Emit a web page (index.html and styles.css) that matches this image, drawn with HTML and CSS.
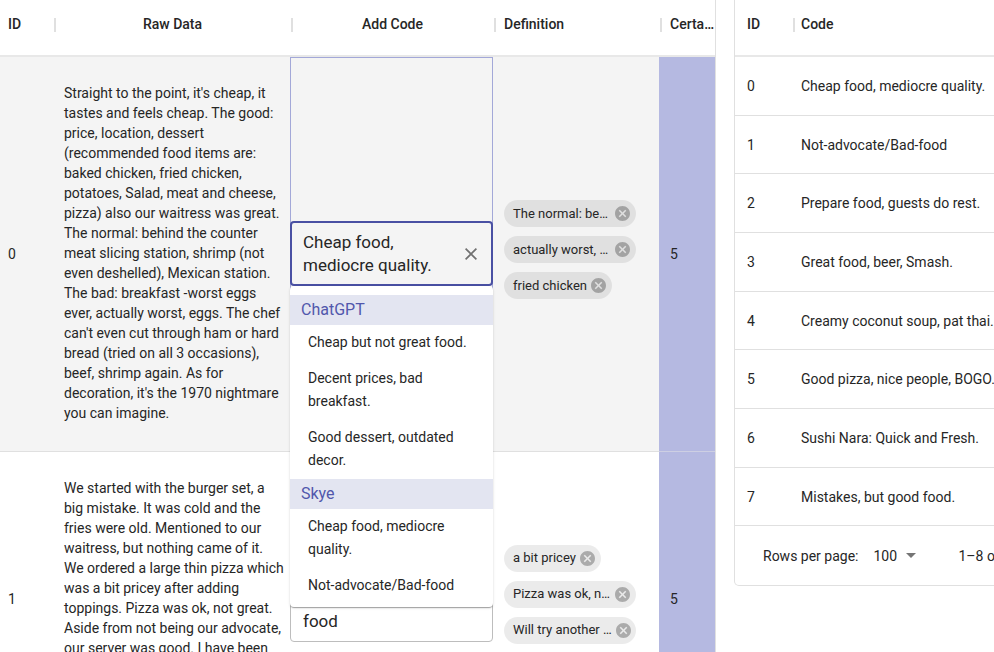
FILE: index.html
```html
<!DOCTYPE html>
<html lang="en">
<head>
<meta charset="utf-8">
<title>Coding table</title>
<link rel="stylesheet" href="styles.css">
</head>
<body>
<svg class="sprite" aria-hidden="true">
  <symbol id="cancel" viewBox="2 2 20 20"><path d="M12 2C6.47 2 2 6.47 2 12s4.47 10 10 10 10-4.47 10-10S17.53 2 12 2zm5 13.59L15.59 17 12 13.41 8.41 17 7 15.59 10.59 12 7 8.41 8.41 7 12 10.59 15.59 7 17 8.41 13.41 12 17 15.59z"/></symbol>
  <symbol id="clear" viewBox="5 5 14 14"><path d="M19 6.41 17.59 5 12 10.59 6.41 5 5 6.41 10.59 12 5 17.59 6.41 19 12 13.41 17.59 19 19 17.59 13.41 12z"/></symbol>
</svg>
<main class="page">
  <section class="panel panel-data">
    <table class="grid">
      <colgroup><col class="col-id"><col><col class="col-code"><col class="col-def"><col class="col-cert"></colgroup>
      <thead>
        <tr>
          <th class="first">ID</th>
          <th class="center">Raw Data</th>
          <th class="center">Add Code</th>
          <th>Definition</th>
          <th>Certa…</th>
        </tr>
      </thead>
      <tbody>
        <tr class="selected">
          <td class="first">0</td>
          <td class="raw">Straight to the point, it's cheap, it tastes and feels cheap. The good: price, location, dessert (recommended food items are: baked chicken, fried chicken, potatoes, Salad, meat and cheese, pizza) also our waitress was great. The normal: behind the counter meat slicing station, shrimp (not even deshelled), Mexican station. The bad: breakfast -worst eggs ever, actually worst, eggs. The chef can't even cut through ham or hard bread (tried on all 3 occasions), beef, shrimp again. As for decoration, it's the 1970 nightmare you can imagine.</td>
          <td class="code editing">
            <div class="field focused">
              <textarea rows="2" aria-label="Code for row 0">Cheap food,
mediocre quality.</textarea>
              <button type="button" class="clear" aria-label="Clear"><svg><use href="#clear"/></svg></button>
              <div class="menu" role="listbox" aria-label="Suggested codes">
                <div class="group">ChatGPT</div>
                <div class="option" role="option">Cheap but not great food.</div>
                <div class="option" role="option">Decent prices, bad breakfast.</div>
                <div class="option" role="option">Good dessert, outdated decor.</div>
                <div class="group">Skye</div>
                <div class="option" role="option">Cheap food, mediocre quality.</div>
                <div class="option" role="option">Not-advocate/Bad-food</div>
              </div>
            </div>
          </td>
          <td>
            <div class="chips">
              <span class="chip wide"><span>The normal: be…</span><button type="button" aria-label="Remove"><svg><use href="#cancel"/></svg></button></span>
              <span class="chip wide"><span>actually worst, …</span><button type="button" aria-label="Remove"><svg><use href="#cancel"/></svg></button></span>
              <span class="chip"><span>fried chicken</span><button type="button" aria-label="Remove"><svg><use href="#cancel"/></svg></button></span>
            </div>
          </td>
          <td class="certainty">5</td>
        </tr>
        <tr class="row-next">
          <td class="first">1</td>
          <td class="raw">We started with the burger set, a big mistake. It was cold and the fries were old. Mentioned to our waitress, but nothing came of it. We ordered a large thin pizza which was a bit pricey after adding toppings. Pizza was ok, not great. Aside from not being our advocate, our server was good. I have been</td>
          <td class="code">
            <div class="field">
              <textarea rows="3" aria-label="Code for row 1">Not-advocate/
Bad-
food</textarea>
            </div>
          </td>
          <td>
            <div class="chips">
              <span class="chip"><span>a bit pricey</span><button type="button" aria-label="Remove"><svg><use href="#cancel"/></svg></button></span>
              <span class="chip wide"><span>Pizza was ok, n…</span><button type="button" aria-label="Remove"><svg><use href="#cancel"/></svg></button></span>
              <span class="chip wide"><span>Will try another …</span><button type="button" aria-label="Remove"><svg><use href="#cancel"/></svg></button></span>
            </div>
          </td>
          <td class="certainty">5</td>
        </tr>
      </tbody>
    </table>
  </section>
  <section class="panel panel-codes">
    <table class="grid codes">
      <colgroup><col class="col-num"><col></colgroup>
      <thead><tr><th class="first">ID</th><th>Code</th></tr></thead>
      <tbody>
        <tr><td class="first">0</td><td>Cheap food, mediocre quality.</td></tr>
        <tr><td class="first">1</td><td>Not-advocate/Bad-food</td></tr>
        <tr><td class="first">2</td><td>Prepare food, guests do rest.</td></tr>
        <tr><td class="first">3</td><td>Great food, beer, Smash.</td></tr>
        <tr><td class="first">4</td><td>Creamy coconut soup, pat thai.</td></tr>
        <tr><td class="first">5</td><td>Good pizza, nice people, BOGO.</td></tr>
        <tr><td class="first">6</td><td>Sushi Nara: Quick and Fresh.</td></tr>
        <tr><td class="first">7</td><td>Mistakes, but good food.</td></tr>
      </tbody>
    </table>
    <footer class="pager">
      <label for="per-page">Rows per page:</label>
      <span class="select">
        <select id="per-page"><option>100</option></select>
        <svg viewBox="0 0 10 5" aria-hidden="true"><path d="M0 0h10L5 5z"/></svg>
      </span>
      <span class="range">1–8 of 8</span>
    </footer>
  </section>
</main>
</body>
</html>
```
FILE: styles.css
```css
* { box-sizing: border-box; }

body {
  margin: 0;
  height: 100vh;
  overflow: hidden;
  background: #fff;
  color: #262626;
  font: 14px/20px Roboto, "Liberation Sans", sans-serif;
}

.sprite { display: none; }

button {
  display: flex;
  flex: none;
  margin: 0;
  padding: 0;
  border: 0;
  background: none;
}

.page {
  display: grid;
  grid-template-columns: minmax(0, 716fr) minmax(0, 260fr);
  align-items: start;
  gap: 18px;
}

.panel-data { border-right: 1px solid #e0e0e0; }

.panel-codes {
  min-width: 420px;
  border: 1px solid #e0e0e0;
  border-top: 0;
  border-radius: 0 0 5px 5px;
}

/* Grid tables */
.grid {
  width: 100%;
  table-layout: fixed;
  border-collapse: separate;
  border-spacing: 0;
}

.col-id { width: 53px; }
.col-code { width: 203px; }
.col-def { width: 166px; }
.col-cert { width: 56px; }
.col-num { width: 57px; }

th {
  position: relative;
  height: 57px;
  padding: 0 0 8px 11px;
  border-bottom: 2px solid #e8e8e8;
  font-weight: 500;
  text-align: left;
  white-space: nowrap;
}

th + th::before {
  content: "";
  position: absolute;
  top: 18px;
  left: 1px;
  width: 2px;
  height: 14px;
  background: #e0e0e0;
}

th.center {
  padding-left: 2px;
  text-align: center;
}

td {
  padding: 0 0 0 11px;
  border-bottom: 1px solid #e0e0e0;
}

th.first,
td.first { padding-left: 8px; }

.codes th,
.codes td { padding-left: 9px; }

.codes th.first,
.codes td.first { padding-left: 12px; }

.codes td { height: 59px; white-space: nowrap; }
.codes tr:nth-child(3n+2) td { height: 58px; }

.selected td { background: #f4f4f4; }
.row-next td { height: 294px; }

td.raw {
  padding: 26px 5px 28px 11px;
  vertical-align: top;
}

td.code { padding: 0 0 2px; }

td.editing { box-shadow: inset 0 0 0 1px #a3a8d8; }

.grid td.certainty {
  background: #b5b9e1;
  border-bottom-color: #cdcfe3;
}

/* Code field */
.field {
  position: relative;
  display: flex;
  align-items: center;
  padding: 10px 12px 8px;
  border: 1px solid #bdbdbd;
  border-radius: 4px;
}

.field.focused {
  padding: 8px 14px 7px 11px;
  border: 2px solid #4950a3;
  background: #f4f4f4;
}

textarea {
  flex: 1;
  min-width: 0;
  margin: 0;
  padding: 0;
  border: 0;
  outline: 0;
  resize: none;
  overflow: hidden;
  background: none;
  color: inherit;
  font: 17px/23px Roboto, "Liberation Sans", sans-serif;
}

.clear svg {
  width: 12px;
  height: 12px;
  fill: #707070;
}

/* Suggestions */
.menu {
  position: absolute;
  z-index: 1;
  top: calc(100% + 2px);
  left: -2px;
  right: -2px;
  padding: 9px 0 3px;
  border-radius: 4px;
  background: #fff;
  box-shadow: 0 2px 1px -1px rgba(0, 0, 0, .2), 0 1px 1px rgba(0, 0, 0, .14), 0 1px 3px rgba(0, 0, 0, .12);
}

.group {
  padding: 0 11px;
  background: #e3e5f1;
  color: #5157ac;
  font-size: 16px;
  line-height: 30px;
}

.option {
  padding: 6px 18px 7px;
  line-height: 23px;
}

/* Chips */
.chips {
  display: flex;
  flex-direction: column;
  align-items: flex-start;
  gap: 9px;
  padding-bottom: 9px;
}

.chip {
  display: flex;
  align-items: center;
  gap: 4px;
  height: 27px;
  padding: 0 6px 0 9px;
  border-radius: 14px;
  background: rgba(0, 0, 0, .08);
  font-size: 13px;
  white-space: nowrap;
}

.chip.wide { width: 132px; }
.chip span { flex: 1; }

.chip svg {
  width: 15px;
  height: 15px;
  fill: rgba(0, 0, 0, .27);
}

/* Pagination */
.pager {
  display: flex;
  align-items: center;
  height: 59px;
  padding-left: 28px;
  white-space: nowrap;
}

.select {
  position: relative;
  display: flex;
  align-items: center;
  margin: 0 42px 0 15px;
}

.select select {
  width: 43px;
  padding: 0;
  border: 0;
  appearance: none;
  background: none;
  color: inherit;
  font: inherit;
}

.select svg {
  position: absolute;
  right: 0;
  width: 10px;
  height: 5px;
  fill: #757575;
  pointer-events: none;
}
```
